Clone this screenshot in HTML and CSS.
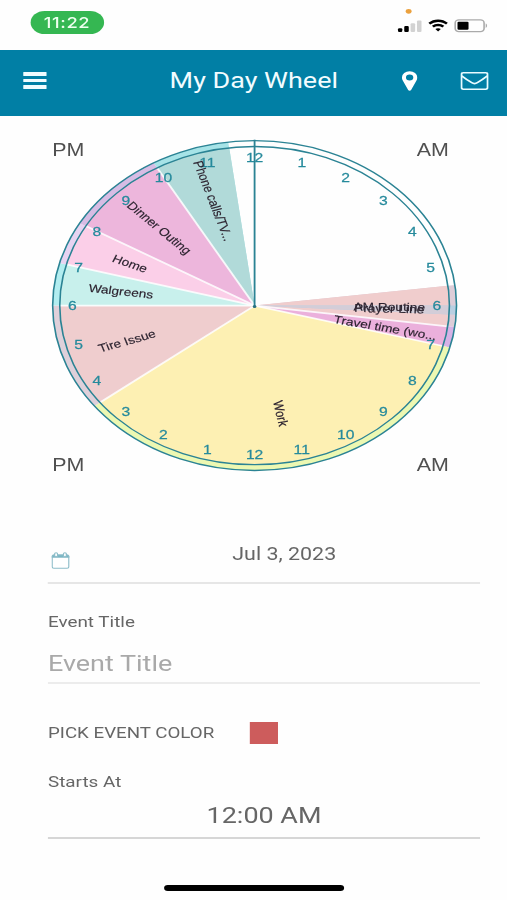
FILE: index.html
```html
<!DOCTYPE html>
<html lang="en">
<head>
<meta charset="utf-8">
<title>My Day Wheel</title>
<link rel="stylesheet" href="styles.css">
</head>
<body>
<div class="screen">
  <div class="status">
    <span class="clock">11:22</span>
    <div class="indicators">
      <svg class="signal" viewBox="0 0 20 14"><circle class="mic" cx="8.7" cy="-7.7" r="2.4"/><rect x="0" y="9.200" width="3.500" height="3.800" rx="1"/><rect x="5.100" y="6.900" width="3.700" height="6.100" rx="1"/><rect class="off" x="10.300" y="4.200" width="3.700" height="8.800" rx="1"/><rect class="off" x="15.500" y="1.500" width="3.700" height="11.500" rx="1"/></svg>
      <svg class="wifi" viewBox="0 0 17 13"><path d="M8.500 2.900c2.400 0 4.600.9 6.300 2.500l1.400-1.700A11.200 11.200 0 0 0 8.500.5 11.200 11.200 0 0 0 .8 3.700l1.400 1.700a9.100 9.100 0 0 1 6.300-2.500zM8.500 7c1.300 0 2.500.5 3.400 1.300l1.500-1.700a7.100 7.100 0 0 0-9.800 0l1.500 1.700c.9-.8 2.100-1.300 3.400-1.300zM8.500 8.900c-.9 0-1.600.3-2.200.8l2.200 2.500 2.200-2.500c-.6-.5-1.300-.8-2.200-.8z"/></svg>
      <svg class="battery" viewBox="0 0 28 14"><rect class="case" x=".7" y=".9" width="23.600" height="11.700" rx="3"/><rect x="2.600" y="2.700" width="9" height="8.100" rx="1"/><path class="cap" d="M25.600 4.600c1.500.6 1.500 3.800 0 4.400z"/></svg>
    </div>
  </div>

  <header class="bar">
    <div class="menu"><i></i><i></i><i></i></div>
    <h1>My Day Wheel</h1>
    <div class="actions">
      <svg class="pin" viewBox="0 0 13 20"><path fill-rule="evenodd" d="M6.500.2A6.300 6.300 0 0 0 .2 6.500c0 1.300.3 2.300.8 3.300l4.300 9.200c.5 1 1.900 1 2.400 0L12 9.800c.5-1 .8-2 .8-3.300A6.300 6.300 0 0 0 6.500.2zm0 3.300a3 3 0 1 1 0 6 3 3 0 0 1 0-6z"/></svg>
      <svg class="mail" viewBox="0 0 23 18"><rect x=".8" y=".8" width="21.400" height="16.400" rx="1.600"/><path d="M1 3.800c3 2.800 5.500 4.800 8.200 6.900 1.600 1.200 3 1.200 4.600 0C16.500 8.600 19 6.600 22 3.800"/></svg>
    </div>
  </header>

  <svg class="wheel" viewBox="0 115.5 414 384.5"></svg>

  <main class="form">
    <div class="date">
      <svg class="calendar" viewBox="0 0 15 17"><rect x=".6" y="3" width="13.600" height="13.200" rx="1.400"/><path class="top" d="M.6 5.200V4.300Q.6 3 2 3h10.800q1.400 0 1.400 1.300v.9z"/><rect class="ring" x="2.600" y=".7" width="2.400" height="4" rx="1.200"/><rect class="ring" x="9.800" y=".7" width="2.400" height="4" rx="1.200"/></svg>
      <span class="day">Jul 3, 2023</span>
    </div>
    <label class="label" for="title">Event Title</label>
    <input id="title" class="field" type="text" placeholder="Event Title">
    <div class="color"><span class="caption">PICK EVENT COLOR</span><span class="swatch"></span></div>
    <div class="label starts">Starts At</div>
    <div class="time">12:00 AM</div>
  </main>
  <div class="home"></div>
</div>
<script src="wheel.js"></script>
</body>
</html>
```

FILE: styles.css
```css
* { box-sizing: border-box; }
body { margin: 0; background: #fefefe; overflow: hidden; }

.screen {
  width: 414px;
  height: 900px;
  display: flex;
  flex-direction: column;
  transform: scaleX(1.2246);
  transform-origin: 0 0;
  font-family: Roboto, "Liberation Sans", sans-serif;
  color: #666;
}

.status { height: 49.5px; flex: none; display: flex; justify-content: space-between; padding: 10.5px 15px 0 24.5px; }
.clock {
  width: 60.5px; height: 23.5px; border-radius: 12px;
  background: #35b752; color: #effff0;
  font: 500 15px/24px Inter, sans-serif; letter-spacing: .5px; text-align: center;
}
.indicators { display: flex; gap: 4.5px; padding-top: 8.7px; }
.indicators svg { display: block; overflow: visible; }
.signal { width: 20px; height: 14px; }
.wifi { width: 17.500px; height: 13.400px; }
.battery { width: 28px; height: 14px; }
.off { fill: #d2d2d2; }
.mic { fill: #eba13e; }
.case { fill: none; stroke: #aaa; stroke-width: 1.3; }
.cap { fill: #aaa; }

.bar {
  height: 66px; flex: none; background: #017fa5;
  display: grid; grid-template-columns: 100px 1fr 100px; align-items: center;
  padding: 0 15.3px 0 18.8px;
}
.menu { display: flex; flex-direction: column; gap: 3.2px; margin-top: -4px; }
.menu i { display: block; width: 19.6px; height: 3.4px; background: #f0fcff; border-radius: .5px; }
h1 { margin: -3px 0 0 -3px; font-size: 22px; line-height: 30px; font-weight: 400; color: #f2fcff; text-align: center; white-space: nowrap; }
.actions { display: flex; justify-content: flex-end; align-items: center; gap: 35px; margin-top: -3px; }
.pin { width: 13px; height: 20px; fill: #fff; }
.mail { width: 23px; height: 18px; fill: none; stroke: #e8fbff; stroke-width: 1.6; }

.wheel { display: block; width: 414px; height: 384.5px; flex: none; font-family: "Liberation Sans", Arial, sans-serif; }
.wheel text { text-anchor: middle; }
.rim { fill: none; stroke: #2b8394; stroke-width: 1.3; }
.noon { stroke: #2b8394; stroke-width: 1.5; }
.divider { stroke: #fff; stroke-width: 1.7; stroke-opacity: .85; }
.hour { font-size: 12.8px; fill: #268a9c; stroke: #268a9c; stroke-width: .25; }
.event { font-size: 11.2px; fill: #2d2430; stroke: #2d2430; stroke-width: .15; }
.half { font-size: 17.5px; fill: #505050; }

.form { padding: 0 22px 0 39.2px; display: flex; flex-direction: column; }
.date { height: 84.3px; border-bottom: 2px solid #e6e6e6; display: flex; padding: 44px 0 0 3.5px; }
.calendar { width: 15px; height: 17px; margin: 7.8px 0 0 -.5px; fill: #fff; stroke: #8dbdc9; stroke-width: 1; }
.calendar .top { fill: #75b5c3; }
.day { flex: 1; padding-left: 15px; text-align: center; font-size: 17.5px; line-height: 20px; }
.label { height: 20px; margin-top: 27.9px; font-size: 15.4px; line-height: 20px; }
.field {
  width: 100%; height: 36px; margin-top: 16px; padding: 0 0 3px; border: 0;
  border-bottom: 2px solid #ececec; border-radius: 0; background: none;
  font: 400 22px/30px Roboto, sans-serif; color: #666; outline: 0;
}
.field::placeholder { color: #a9a9a9; opacity: 1; }
.color { height: 22px; margin-top: 37.5px; display: flex; align-items: center; }
.caption { width: 165.3px; padding-top: 1px; font-size: 15.3px; line-height: 22px; }
.swatch { width: 22.4px; height: 22px; background: #cd5c5c; }
.starts { margin-top: 28.3px; }
.time { height: 46px; margin-top: 1px; padding-top: 8.5px; border-bottom: 2px solid #d6d6d6; font-size: 22px; line-height: 30px; text-align: center; }
.home { width: 147.5px; height: 6px; margin: auto 0 9px 133.8px; border-radius: 3px; background: #000; }
```

FILE: wheel.js
```js
// Angles are degrees clockwise from the top of the dial; each hour is 15 degrees.
const CX = 207.9, CY = 305.1, OUTER = 164.9, INNER = 159.1;
const svg = document.querySelector('.wheel');

function add(name, attrs, text) {
  const el = document.createElementNS('http://www.w3.org/2000/svg', name);
  for (const key in attrs) el.setAttribute(key, attrs[key]);
  if (text) el.textContent = text;
  svg.appendChild(el);
}
function point(angle, r) {
  const a = angle * Math.PI / 180;
  return [CX + r * Math.sin(a), CY - r * Math.cos(a)];
}
function sector(from, to, r) {
  return `M${CX} ${CY}L${point(from, r)}A${r} ${r} 0 0 1 ${point(to, r)}Z`;
}

const events = [
  { from: 82.8, to: 97.5, fill: '#f0cdcd', rim: '#ddcdd8', name: 'AM Routine', tilt: 90.6 },
  { from: 90, to: 93.2, fill: '#d3cdd8', rim: '#b9cfe2', name: 'Prayer Line', tilt: 91.6 },
  { from: 97.5, to: 104.7, fill: '#ebb0dc', rim: '#d6b2e6', name: 'Travel time (wo...', tilt: 101.6, shift: -1 },
  { from: 104.7, to: 232.5, fill: '#fdf0b3', rim: '#ecf8b2', name: 'Work', tilt: 168.8 },
  { from: 232.5, to: 270, fill: '#efcdce', rim: '#dfd0da', name: 'Tire Issue', tilt: 251.3 },
  { from: 270, to: 285, fill: '#c8f0ec', rim: '#b2edf0', name: 'Walgreens', tilt: 277.5 },
  { from: 285, to: 300, fill: '#fbcfe8', rim: '#e7d3f2', name: 'Home', tilt: 292.5 },
  { from: 300, to: 330, fill: '#edb6dc', rim: '#d7bce4', name: 'Dinner Outing', tilt: 315 },
  { from: 330, to: 352.5, fill: '#b1dad9', rim: '#a6e3e7', name: 'Phone calls/TV...', tilt: 342.2 }
];

for (const e of events) {
  add('path', { d: sector(e.from, e.to, OUTER), fill: e.rim });
  add('path', { d: sector(e.from, e.to, INNER), fill: e.fill });
}
for (const a of [97.5, 104.7, 232.5, 270, 285, 300, 330]) {
  const [x, y] = point(a, INNER);
  add('line', { class: 'divider', x1: CX, y1: CY, x2: x, y2: y });
}
add('circle', { class: 'rim', cx: CX, cy: CY, r: OUTER });
add('circle', { class: 'rim', cx: CX, cy: CY, r: INNER });
add('line', { class: 'noon', x1: CX, y1: CY - OUTER - 1, x2: CX, y2: CY + 1 });
add('circle', { cx: CX, cy: CY + 1, r: 1.5, fill: '#2b6f80' });

for (let h = 0; h < 24; h++) {
  const [x, y] = point(h * 15, 148.8);
  add('text', { class: 'hour', x, y: y + 4.8 }, String(h % 12 || 12));
}
for (const e of events) {
  const [x, y] = point(e.tilt, 110 + (e.shift || 0));
  const turn = e.tilt > 180 ? e.tilt - 270 : e.tilt - 90;
  add('text', { class: 'event', x, y: y + 4, transform: `rotate(${turn} ${x} ${y})` }, e.name);
}
add('text', { class: 'half', x: 55.7, y: 155.8 }, 'PM');
add('text', { class: 'half', x: 353.5, y: 155.8 }, 'AM');
add('text', { class: 'half', x: 55.7, y: 471 }, 'PM');
add('text', { class: 'half', x: 353.5, y: 471 }, 'AM');
```
